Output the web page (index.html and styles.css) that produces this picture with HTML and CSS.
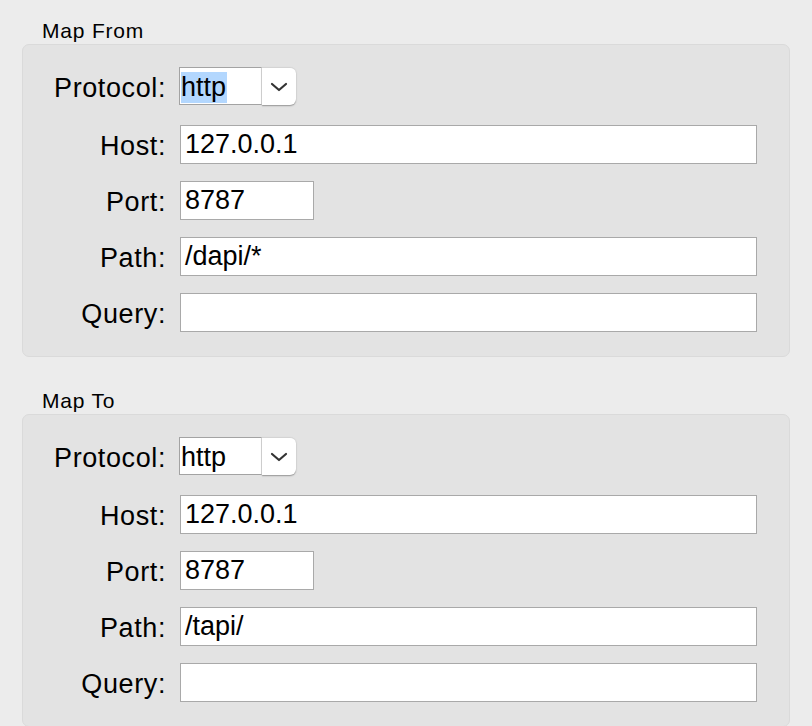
FILE: index.html
```html
<!DOCTYPE html>
<html>
<head>
<meta charset="utf-8">
<link rel="stylesheet" href="styles.css">
</head>
<body>
<div class="page">
  <section class="group">
    <div class="group-title">Map From</div>
    <div class="panel">
      <div class="row row-first">
        <label class="label">Protocol:</label>
        <div class="select">
          <div class="select-value"><span class="sel">http</span></div>
          <div class="select-btn">
            <svg width="18" height="10" viewBox="0 0 18 10"><path d="M2 2 L9 8 L16 2" fill="none" stroke="#333" stroke-width="2.2" stroke-linecap="round" stroke-linejoin="round"/></svg>
          </div>
        </div>
      </div>
      <div class="row"><label class="label">Host:</label><div class="input">127.0.0.1</div></div>
      <div class="row"><label class="label">Port:</label><div class="input input-short">8787</div></div>
      <div class="row"><label class="label">Path:</label><div class="input">/dapi/*</div></div>
      <div class="row"><label class="label">Query:</label><div class="input"></div></div>
    </div>
  </section>
  <section class="group group-second">
    <div class="group-title">Map To</div>
    <div class="panel">
      <div class="row row-first">
        <label class="label">Protocol:</label>
        <div class="select">
          <div class="select-value">http</div>
          <div class="select-btn">
            <svg width="18" height="10" viewBox="0 0 18 10"><path d="M2 2 L9 8 L16 2" fill="none" stroke="#333" stroke-width="2.2" stroke-linecap="round" stroke-linejoin="round"/></svg>
          </div>
        </div>
      </div>
      <div class="row"><label class="label">Host:</label><div class="input">127.0.0.1</div></div>
      <div class="row"><label class="label">Port:</label><div class="input input-short">8787</div></div>
      <div class="row"><label class="label">Path:</label><div class="input">/tapi/</div></div>
      <div class="row"><label class="label">Query:</label><div class="input"></div></div>
    </div>
  </section>
</div>
</body>
</html>
```
FILE: styles.css
```css
html, body {
  margin: 0;
  padding: 0;
  background: #ececec;
  font-family: "Liberation Sans", Arial, sans-serif;
  color: #000;
  overflow: hidden;
}
.page {
  padding: 19px 22px 0 22px;
}
.group-title {
  font-size: 21px;
  letter-spacing: 0.8px;
  line-height: 24px;
  height: 24px;
  padding-left: 20px;
  margin-bottom: 1px;
}
.group-second {
  margin-top: 32px;
}
.panel {
  background: #e3e3e3;
  border: 1px solid #dadada;
  border-radius: 7px;
  padding: 22px 32px 24px 0;
  display: flex;
  flex-direction: column;
  gap: 17px;
}
.row {
  display: grid;
  grid-template-columns: 143px 1fr;
  column-gap: 14px;
  align-items: center;
  height: 39px;
}
.row-first {
  height: 38px;
  margin-bottom: 3px;
}
.label {
  text-align: right;
  font-size: 27px;
  letter-spacing: 0.6px;
  line-height: 30px;
  padding-top: 3px;
}
.input {
  box-sizing: border-box;
  height: 39px;
  background: #fff;
  border: 1px solid #a9a9a9;
  font-size: 27px;
  line-height: 37px;
  padding-left: 4px;
  white-space: nowrap;
}
.input-short {
  width: 134px;
}
.select {
  display: flex;
  margin-left: -1px;
  height: 38px;
  width: 117px;
}
.select-value {
  box-sizing: border-box;
  width: 83px;
  height: 38px;
  background: #fff;
  border: 1px solid #a3a3a3;
  border-right: 1px solid #dcdcdc;
  font-size: 27px;
  line-height: 36px;
  padding-left: 1px;
  padding-top: 1px;
}
.sel {
  background: #b3d7fe;
  display: inline-block;
  line-height: 31px;
  padding-right: 1px;
}
.select-btn {
  box-sizing: border-box;
  flex: 1;
  height: 38px;
  background: #fff;
  border-radius: 0 6px 6px 0;
  border-top: 1px solid #d4d4d4;
  box-shadow: 0 1px 1.5px rgba(0, 0, 0, 0.35);
  display: flex;
  align-items: center;
  justify-content: center;
}
```
